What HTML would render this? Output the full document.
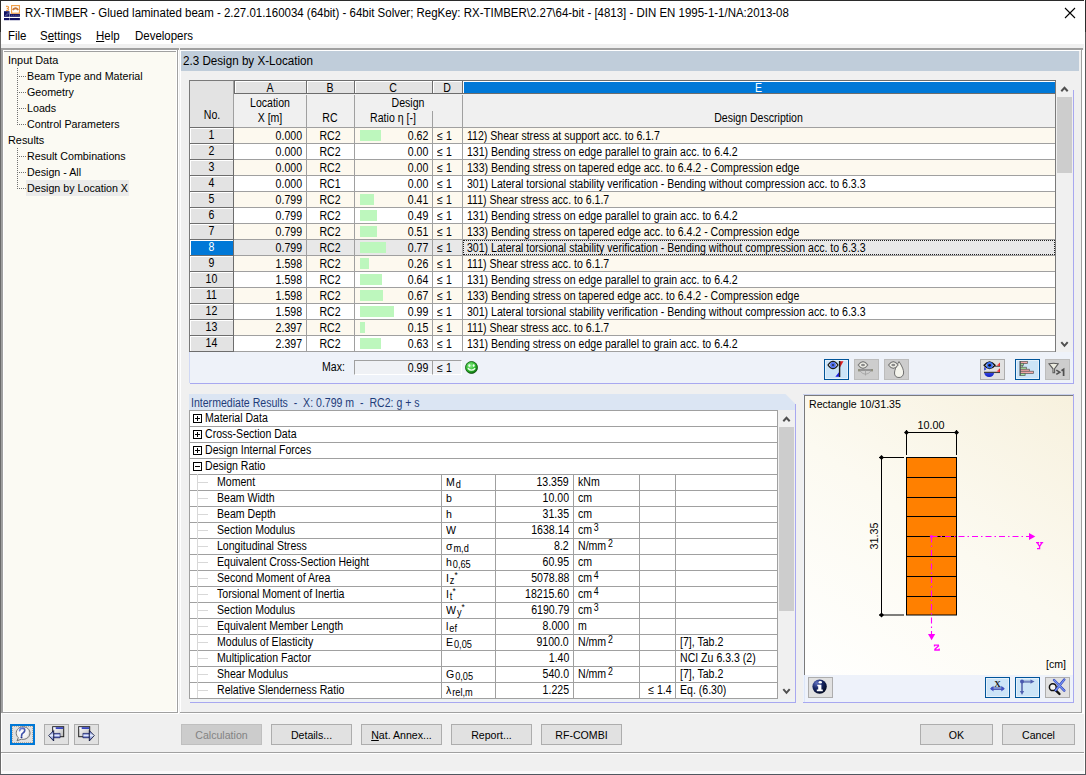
<!DOCTYPE html>
<html><head><meta charset="utf-8">
<style>
*{box-sizing:border-box;margin:0;padding:0}
html,body{width:1086px;height:775px;overflow:hidden;background:#f0f0f0;font-family:"Liberation Sans",sans-serif;color:#000}
.a{position:absolute}
svg.a{overflow:visible}
.t{position:absolute;white-space:nowrap;line-height:16px;font-size:10.8px}
sub{font-size:10px;vertical-align:baseline;position:relative;top:2px;margin-left:1px}
sup{font-size:10px;vertical-align:baseline;position:relative;top:-3px;margin-left:2px}
</style></head><body>

<div class="a" style="left:0px;top:0px;width:1086px;height:775px;background:#f0f0f0"></div>
<div class="a" style="left:0px;top:0px;width:1086px;height:1px;background:#2b2b2b"></div>
<div class="a" style="left:0px;top:0px;width:1px;height:32px;background:#2a2a2a"></div>
<div class="a" style="left:0px;top:32px;width:1px;height:743px;background:#6a6a6a"></div>
<div class="a" style="left:1085px;top:0px;width:1px;height:32px;background:#2b2b2b"></div>
<div class="a" style="left:1085px;top:32px;width:1px;height:743px;background:#5a5a5a"></div>
<div class="a" style="left:1084px;top:0px;width:1px;height:775px;background:#fff"></div>
<div class="a" style="left:0px;top:774px;width:1086px;height:1px;background:#505860"></div>
<div class="a" style="left:1px;top:771px;width:1083px;height:3px;background:#fafafa"></div>
<div class="a" style="left:1px;top:1px;width:1083px;height:43px;background:#fff"></div>
<svg class="a" style="left:2px;top:3px" width="20" height="19" viewBox="2 3 20 19">
<rect x="4" y="11.2" width="5.5" height="5.6" fill="#101060"/>
<path d="M5 16L8.5 12M6.5 16L9 13" stroke="#8080b0" stroke-width="0.6"/>
<rect x="9.9" y="13.8" width="10" height="3" fill="#101060"/>
<path d="M11 15.3H19" stroke="#6060a0" stroke-width="0.8" stroke-dasharray="1.2 0.6"/>
<rect x="4" y="18" width="5.5" height="2.2" fill="#101060"/>
<rect x="9.9" y="18" width="10" height="2.2" fill="#101060"/>
<rect x="11.6" y="5.6" width="7.8" height="7.6" fill="#fff" stroke="#f09a40" stroke-width="1.1"/>
<path d="M12.8 10Q15.5 6.6 18.2 10" stroke="#c87838" stroke-width="2" fill="none"/>
<path d="M6 6.4Q8.8 5.8 8.6 7.6Q8.4 8.6 6.8 8.4M6.8 8.4Q8.9 8.6 8.6 9.8Q8.2 10.8 6 10.2" stroke="#f09a40" stroke-width="1.1" fill="none"/>
</svg>
<div class="t" style="left:25px;top:5px;;font-size:12px;transform:scaleX(0.956);transform-origin:0 0">RX-TIMBER - Glued laminated beam - 2.27.01.160034 (64bit) - 64bit Solver; RegKey: RX-TIMBER\2.27\64-bit - [4813] - DIN EN 1995-1-1/NA:2013-08</div>
<svg class="a" style="left:1064px;top:7px" width="12" height="12"><path d="M1 1L11 11M11 1L1 11" stroke="#000" stroke-width="1.1"/></svg>
<div class="t" style="left:8px;top:28px;;font-size:12px;transform:scaleX(0.956);transform-origin:0 0">File</div>
<div class="t" style="left:40px;top:28px;;font-size:12px;transform:scaleX(0.956);transform-origin:0 0">S<u>e</u>ttings</div>
<div class="t" style="left:96px;top:28px;;font-size:12px;transform:scaleX(0.956);transform-origin:0 0"><u>H</u>elp</div>
<div class="t" style="left:135px;top:28px;;font-size:12px;transform:scaleX(0.956);transform-origin:0 0">Developers</div>
<div class="a" style="left:1px;top:44px;width:1083px;height:4px;background:#f0f0f0"></div>
<div class="a" style="left:1px;top:48px;width:1082px;height:2px;background:#a0a0a0"></div>
<div class="a" style="left:179px;top:48px;width:1px;height:2px;background:#f0f0f0"></div>
<div class="a" style="left:1px;top:50px;width:2px;height:663px;background:#a0a0a0"></div>
<div class="a" style="left:1px;top:713px;width:1px;height:58px;background:#fff"></div>
<div class="a" style="left:3px;top:50px;width:176px;height:664px;background:#fff"></div>
<div class="a" style="left:4px;top:51px;width:172px;height:1px;background:#a0a0a0"></div>
<div class="a" style="left:4px;top:52px;width:172px;height:659px;background:#fbfaf3"></div>
<div class="a" style="left:177px;top:50px;width:1px;height:663px;background:#a0a0a0"></div>
<div class="a" style="left:3px;top:712px;width:175px;height:1px;background:#a0a0a0"></div>
<div class="t" style="left:8px;top:52px;;font-size:10.9px">Input Data</div>
<div class="t" style="left:27px;top:68px;;font-size:10.7px">Beam Type and Material</div>
<div class="a" style="left:17px;top:76px;width:9px;height:1px;background-image:linear-gradient(90deg,#707070 50%,transparent 50%);background-size:2px 1px"></div>
<div class="t" style="left:27px;top:84px;;font-size:10.7px">Geometry</div>
<div class="a" style="left:17px;top:92px;width:9px;height:1px;background-image:linear-gradient(90deg,#707070 50%,transparent 50%);background-size:2px 1px"></div>
<div class="t" style="left:27px;top:100px;;font-size:10.7px">Loads</div>
<div class="a" style="left:17px;top:108px;width:9px;height:1px;background-image:linear-gradient(90deg,#707070 50%,transparent 50%);background-size:2px 1px"></div>
<div class="t" style="left:27px;top:116px;;font-size:10.7px">Control Parameters</div>
<div class="a" style="left:17px;top:124px;width:9px;height:1px;background-image:linear-gradient(90deg,#707070 50%,transparent 50%);background-size:2px 1px"></div>
<div class="t" style="left:8px;top:132px;;font-size:10.9px">Results</div>
<div class="t" style="left:27px;top:148px;;font-size:10.7px">Result Combinations</div>
<div class="a" style="left:17px;top:156px;width:9px;height:1px;background-image:linear-gradient(90deg,#707070 50%,transparent 50%);background-size:2px 1px"></div>
<div class="t" style="left:27px;top:164px;;font-size:10.7px">Design - All</div>
<div class="a" style="left:17px;top:172px;width:9px;height:1px;background-image:linear-gradient(90deg,#707070 50%,transparent 50%);background-size:2px 1px"></div>
<div class="a" style="left:26px;top:180px;width:103px;height:16px;background:#ebebea"></div>
<div class="t" style="left:27px;top:180px;;font-size:10.7px">Design by Location X</div>
<div class="a" style="left:17px;top:188px;width:9px;height:1px;background-image:linear-gradient(90deg,#707070 50%,transparent 50%);background-size:2px 1px"></div>
<div class="a" style="left:17px;top:68px;width:1px;height:57px;background-image:linear-gradient(#707070 50%,transparent 50%);background-size:1px 2px"></div>
<div class="a" style="left:17px;top:148px;width:1px;height:41px;background-image:linear-gradient(#707070 50%,transparent 50%);background-size:1px 2px"></div>
<div class="a" style="left:180px;top:50px;width:904px;height:664px;background:#fff"></div>
<div class="a" style="left:181px;top:51px;width:900px;height:661px;background:#f0f0f0"></div>
<div class="a" style="left:1081px;top:50px;width:1px;height:663px;background:#a0a0a0"></div>
<div class="a" style="left:180px;top:712px;width:902px;height:1px;background:#a0a0a0"></div>
<div class="a" style="left:181px;top:51px;width:898px;height:20px;background:#c0cdda"></div>
<div class="t" style="left:183px;top:53px;;font-size:12px;transform:scaleX(0.97);transform-origin:0 0">2.3 Design by X-Location</div>
<div class="a" style="left:189px;top:80px;width:867px;height:272px;background:#f0f0f0;border-left:1px solid #7a7a7a;border-top:1px solid #7a7a7a"></div>
<div class="a" style="left:190px;top:81px;width:44px;height:46px;background:#e3e3e3;border-right:1px solid #a0a0a0"></div>
<div class="t" style="left:190px;width:44px;text-align:center;top:107px;;font-size:12px;transform:scaleX(0.88);transform-origin:50% 0">No.</div>
<div class="a" style="left:234px;top:80px;width:73px;height:14px;background:#6d6d6d"></div>
<div class="a" style="left:235px;top:81px;width:71px;height:12px;background:#fff"></div>
<div class="a" style="left:236px;top:82px;width:70px;height:11px;background:#e3e3e3"></div>
<div class="t" style="left:234px;width:72px;text-align:center;top:80px;;font-size:12px;transform:scaleX(0.88);transform-origin:50% 0">A</div>
<div class="a" style="left:306px;top:80px;width:49px;height:14px;background:#6d6d6d"></div>
<div class="a" style="left:307px;top:81px;width:47px;height:12px;background:#fff"></div>
<div class="a" style="left:308px;top:82px;width:46px;height:11px;background:#e3e3e3"></div>
<div class="t" style="left:306px;width:48px;text-align:center;top:80px;;font-size:12px;transform:scaleX(0.88);transform-origin:50% 0">B</div>
<div class="a" style="left:354px;top:80px;width:79px;height:14px;background:#6d6d6d"></div>
<div class="a" style="left:355px;top:81px;width:77px;height:12px;background:#fff"></div>
<div class="a" style="left:356px;top:82px;width:76px;height:11px;background:#e3e3e3"></div>
<div class="t" style="left:354px;width:78px;text-align:center;top:80px;;font-size:12px;transform:scaleX(0.88);transform-origin:50% 0">C</div>
<div class="a" style="left:432px;top:80px;width:31px;height:14px;background:#6d6d6d"></div>
<div class="a" style="left:433px;top:81px;width:29px;height:12px;background:#fff"></div>
<div class="a" style="left:434px;top:82px;width:28px;height:11px;background:#e3e3e3"></div>
<div class="t" style="left:432px;width:30px;text-align:center;top:80px;;font-size:12px;transform:scaleX(0.88);transform-origin:50% 0">D</div>
<div class="a" style="left:462px;top:80px;width:594px;height:14px;background:#6d6d6d"></div>
<div class="a" style="left:463px;top:81px;width:592px;height:12px;background:#fff"></div>
<div class="a" style="left:464px;top:82px;width:591px;height:11px;background:#0078d7"></div>
<div class="t" style="left:462px;width:593px;text-align:center;top:80px;color:#fff;font-size:12px;transform:scaleX(0.88);transform-origin:50% 0">E</div>
<div class="a" style="left:234px;top:95px;width:821px;height:32px;background:#f0f0f0"></div>
<div class="a" style="left:306px;top:95px;width:1px;height:32px;background:#a0a0a0"></div>
<div class="a" style="left:354px;top:95px;width:1px;height:32px;background:#a0a0a0"></div>
<div class="a" style="left:462px;top:95px;width:1px;height:32px;background:#a0a0a0"></div>
<div class="a" style="left:432px;top:111px;width:1px;height:16px;background:#a0a0a0"></div>
<div class="t" style="left:234px;width:72px;text-align:center;top:95px;;font-size:12px;transform:scaleX(0.88);transform-origin:50% 0">Location</div>
<div class="t" style="left:234px;width:72px;text-align:center;top:110px;;font-size:12px;transform:scaleX(0.88);transform-origin:50% 0">X [m]</div>
<div class="t" style="left:306px;width:48px;text-align:center;top:110px;;font-size:12px;transform:scaleX(0.88);transform-origin:50% 0">RC</div>
<div class="t" style="left:354px;width:108px;text-align:center;top:95px;;font-size:12px;transform:scaleX(0.88);transform-origin:50% 0">Design</div>
<div class="t" style="left:354px;width:78px;text-align:center;top:110px;;font-size:12px;transform:scaleX(0.88);transform-origin:50% 0">Ratio &eta; [-]</div>
<div class="t" style="left:462px;width:593px;text-align:center;top:110px;;font-size:12px;transform:scaleX(0.88);transform-origin:50% 0">Design Description</div>
<div class="a" style="left:234px;top:127px;width:821px;height:16px;background:#fdf9ef;border-top:1px solid #a0a0a0"></div>
<div class="a" style="left:306px;top:127px;width:1px;height:16px;background:#a0a0a0"></div>
<div class="a" style="left:354px;top:127px;width:1px;height:16px;background:#a0a0a0"></div>
<div class="a" style="left:432px;top:127px;width:1px;height:16px;background:#a0a0a0"></div>
<div class="a" style="left:462px;top:127px;width:1px;height:16px;background:#a0a0a0"></div>
<div class="a" style="left:190px;top:127px;width:44px;height:16px;background:#6d6d6d"></div>
<div class="a" style="left:190px;top:128px;width:43px;height:15px;background:#fff"></div>
<div class="a" style="left:191px;top:129px;width:42px;height:14px;background:#e3e3e3"></div>
<div class="t" style="left:190px;width:43px;text-align:center;top:127px;;font-size:12px;transform:scaleX(0.88);transform-origin:50% 0">1</div>
<div class="t" style="right:784px;top:128px;;font-size:12px;transform:scaleX(0.88);transform-origin:100% 0">0.000</div>
<div class="t" style="left:306px;width:48px;text-align:center;top:128px;;font-size:12px;transform:scaleX(0.88);transform-origin:50% 0">RC2</div>
<div class="a" style="left:360px;top:130px;width:21px;height:11px;background:#bdf7bd"></div>
<div class="t" style="right:658px;top:128px;;font-size:12px;transform:scaleX(0.88);transform-origin:100% 0">0.62</div>
<div class="t" style="left:437px;top:128px;;font-size:12px;transform:scaleX(0.88);transform-origin:0 0">&le;</div>
<div class="t" style="left:446px;top:128px;;font-size:12px;transform:scaleX(0.88);transform-origin:0 0">1</div>
<div class="t" style="left:467px;top:128px;;font-size:12px;transform:scaleX(0.88);transform-origin:0 0">112) Shear stress at support acc. to 6.1.7</div>
<div class="a" style="left:234px;top:143px;width:821px;height:16px;background:#ffffff;border-top:1px solid #a0a0a0"></div>
<div class="a" style="left:306px;top:143px;width:1px;height:16px;background:#a0a0a0"></div>
<div class="a" style="left:354px;top:143px;width:1px;height:16px;background:#a0a0a0"></div>
<div class="a" style="left:432px;top:143px;width:1px;height:16px;background:#a0a0a0"></div>
<div class="a" style="left:462px;top:143px;width:1px;height:16px;background:#a0a0a0"></div>
<div class="a" style="left:190px;top:143px;width:44px;height:16px;background:#6d6d6d"></div>
<div class="a" style="left:190px;top:144px;width:43px;height:15px;background:#fff"></div>
<div class="a" style="left:191px;top:145px;width:42px;height:14px;background:#e3e3e3"></div>
<div class="t" style="left:190px;width:43px;text-align:center;top:143px;;font-size:12px;transform:scaleX(0.88);transform-origin:50% 0">2</div>
<div class="t" style="right:784px;top:144px;;font-size:12px;transform:scaleX(0.88);transform-origin:100% 0">0.000</div>
<div class="t" style="left:306px;width:48px;text-align:center;top:144px;;font-size:12px;transform:scaleX(0.88);transform-origin:50% 0">RC2</div>
<div class="t" style="right:658px;top:144px;;font-size:12px;transform:scaleX(0.88);transform-origin:100% 0">0.00</div>
<div class="t" style="left:437px;top:144px;;font-size:12px;transform:scaleX(0.88);transform-origin:0 0">&le;</div>
<div class="t" style="left:446px;top:144px;;font-size:12px;transform:scaleX(0.88);transform-origin:0 0">1</div>
<div class="t" style="left:467px;top:144px;;font-size:12px;transform:scaleX(0.88);transform-origin:0 0">131) Bending stress on edge parallel to grain acc. to 6.4.2</div>
<div class="a" style="left:234px;top:159px;width:821px;height:16px;background:#fdf9ef;border-top:1px solid #a0a0a0"></div>
<div class="a" style="left:306px;top:159px;width:1px;height:16px;background:#a0a0a0"></div>
<div class="a" style="left:354px;top:159px;width:1px;height:16px;background:#a0a0a0"></div>
<div class="a" style="left:432px;top:159px;width:1px;height:16px;background:#a0a0a0"></div>
<div class="a" style="left:462px;top:159px;width:1px;height:16px;background:#a0a0a0"></div>
<div class="a" style="left:190px;top:159px;width:44px;height:16px;background:#6d6d6d"></div>
<div class="a" style="left:190px;top:160px;width:43px;height:15px;background:#fff"></div>
<div class="a" style="left:191px;top:161px;width:42px;height:14px;background:#e3e3e3"></div>
<div class="t" style="left:190px;width:43px;text-align:center;top:159px;;font-size:12px;transform:scaleX(0.88);transform-origin:50% 0">3</div>
<div class="t" style="right:784px;top:160px;;font-size:12px;transform:scaleX(0.88);transform-origin:100% 0">0.000</div>
<div class="t" style="left:306px;width:48px;text-align:center;top:160px;;font-size:12px;transform:scaleX(0.88);transform-origin:50% 0">RC2</div>
<div class="t" style="right:658px;top:160px;;font-size:12px;transform:scaleX(0.88);transform-origin:100% 0">0.00</div>
<div class="t" style="left:437px;top:160px;;font-size:12px;transform:scaleX(0.88);transform-origin:0 0">&le;</div>
<div class="t" style="left:446px;top:160px;;font-size:12px;transform:scaleX(0.88);transform-origin:0 0">1</div>
<div class="t" style="left:467px;top:160px;;font-size:12px;transform:scaleX(0.88);transform-origin:0 0">133) Bending stress on tapered edge acc. to 6.4.2 - Compression edge</div>
<div class="a" style="left:234px;top:175px;width:821px;height:16px;background:#ffffff;border-top:1px solid #a0a0a0"></div>
<div class="a" style="left:306px;top:175px;width:1px;height:16px;background:#a0a0a0"></div>
<div class="a" style="left:354px;top:175px;width:1px;height:16px;background:#a0a0a0"></div>
<div class="a" style="left:432px;top:175px;width:1px;height:16px;background:#a0a0a0"></div>
<div class="a" style="left:462px;top:175px;width:1px;height:16px;background:#a0a0a0"></div>
<div class="a" style="left:190px;top:175px;width:44px;height:16px;background:#6d6d6d"></div>
<div class="a" style="left:190px;top:176px;width:43px;height:15px;background:#fff"></div>
<div class="a" style="left:191px;top:177px;width:42px;height:14px;background:#e3e3e3"></div>
<div class="t" style="left:190px;width:43px;text-align:center;top:175px;;font-size:12px;transform:scaleX(0.88);transform-origin:50% 0">4</div>
<div class="t" style="right:784px;top:176px;;font-size:12px;transform:scaleX(0.88);transform-origin:100% 0">0.000</div>
<div class="t" style="left:306px;width:48px;text-align:center;top:176px;;font-size:12px;transform:scaleX(0.88);transform-origin:50% 0">RC1</div>
<div class="t" style="right:658px;top:176px;;font-size:12px;transform:scaleX(0.88);transform-origin:100% 0">0.00</div>
<div class="t" style="left:437px;top:176px;;font-size:12px;transform:scaleX(0.88);transform-origin:0 0">&le;</div>
<div class="t" style="left:446px;top:176px;;font-size:12px;transform:scaleX(0.88);transform-origin:0 0">1</div>
<div class="t" style="left:467px;top:176px;;font-size:12px;transform:scaleX(0.88);transform-origin:0 0">301) Lateral torsional stability verification - Bending without compression acc. to 6.3.3</div>
<div class="a" style="left:234px;top:191px;width:821px;height:16px;background:#fdf9ef;border-top:1px solid #a0a0a0"></div>
<div class="a" style="left:306px;top:191px;width:1px;height:16px;background:#a0a0a0"></div>
<div class="a" style="left:354px;top:191px;width:1px;height:16px;background:#a0a0a0"></div>
<div class="a" style="left:432px;top:191px;width:1px;height:16px;background:#a0a0a0"></div>
<div class="a" style="left:462px;top:191px;width:1px;height:16px;background:#a0a0a0"></div>
<div class="a" style="left:190px;top:191px;width:44px;height:16px;background:#6d6d6d"></div>
<div class="a" style="left:190px;top:192px;width:43px;height:15px;background:#fff"></div>
<div class="a" style="left:191px;top:193px;width:42px;height:14px;background:#e3e3e3"></div>
<div class="t" style="left:190px;width:43px;text-align:center;top:191px;;font-size:12px;transform:scaleX(0.88);transform-origin:50% 0">5</div>
<div class="t" style="right:784px;top:192px;;font-size:12px;transform:scaleX(0.88);transform-origin:100% 0">0.799</div>
<div class="t" style="left:306px;width:48px;text-align:center;top:192px;;font-size:12px;transform:scaleX(0.88);transform-origin:50% 0">RC2</div>
<div class="a" style="left:360px;top:194px;width:14px;height:11px;background:#bdf7bd"></div>
<div class="t" style="right:658px;top:192px;;font-size:12px;transform:scaleX(0.88);transform-origin:100% 0">0.41</div>
<div class="t" style="left:437px;top:192px;;font-size:12px;transform:scaleX(0.88);transform-origin:0 0">&le;</div>
<div class="t" style="left:446px;top:192px;;font-size:12px;transform:scaleX(0.88);transform-origin:0 0">1</div>
<div class="t" style="left:467px;top:192px;;font-size:12px;transform:scaleX(0.88);transform-origin:0 0">111) Shear stress acc. to 6.1.7</div>
<div class="a" style="left:234px;top:207px;width:821px;height:16px;background:#ffffff;border-top:1px solid #a0a0a0"></div>
<div class="a" style="left:306px;top:207px;width:1px;height:16px;background:#a0a0a0"></div>
<div class="a" style="left:354px;top:207px;width:1px;height:16px;background:#a0a0a0"></div>
<div class="a" style="left:432px;top:207px;width:1px;height:16px;background:#a0a0a0"></div>
<div class="a" style="left:462px;top:207px;width:1px;height:16px;background:#a0a0a0"></div>
<div class="a" style="left:190px;top:207px;width:44px;height:16px;background:#6d6d6d"></div>
<div class="a" style="left:190px;top:208px;width:43px;height:15px;background:#fff"></div>
<div class="a" style="left:191px;top:209px;width:42px;height:14px;background:#e3e3e3"></div>
<div class="t" style="left:190px;width:43px;text-align:center;top:207px;;font-size:12px;transform:scaleX(0.88);transform-origin:50% 0">6</div>
<div class="t" style="right:784px;top:208px;;font-size:12px;transform:scaleX(0.88);transform-origin:100% 0">0.799</div>
<div class="t" style="left:306px;width:48px;text-align:center;top:208px;;font-size:12px;transform:scaleX(0.88);transform-origin:50% 0">RC2</div>
<div class="a" style="left:360px;top:210px;width:17px;height:11px;background:#bdf7bd"></div>
<div class="t" style="right:658px;top:208px;;font-size:12px;transform:scaleX(0.88);transform-origin:100% 0">0.49</div>
<div class="t" style="left:437px;top:208px;;font-size:12px;transform:scaleX(0.88);transform-origin:0 0">&le;</div>
<div class="t" style="left:446px;top:208px;;font-size:12px;transform:scaleX(0.88);transform-origin:0 0">1</div>
<div class="t" style="left:467px;top:208px;;font-size:12px;transform:scaleX(0.88);transform-origin:0 0">131) Bending stress on edge parallel to grain acc. to 6.4.2</div>
<div class="a" style="left:234px;top:223px;width:821px;height:16px;background:#fdf9ef;border-top:1px solid #a0a0a0"></div>
<div class="a" style="left:306px;top:223px;width:1px;height:16px;background:#a0a0a0"></div>
<div class="a" style="left:354px;top:223px;width:1px;height:16px;background:#a0a0a0"></div>
<div class="a" style="left:432px;top:223px;width:1px;height:16px;background:#a0a0a0"></div>
<div class="a" style="left:462px;top:223px;width:1px;height:16px;background:#a0a0a0"></div>
<div class="a" style="left:190px;top:223px;width:44px;height:16px;background:#6d6d6d"></div>
<div class="a" style="left:190px;top:224px;width:43px;height:15px;background:#fff"></div>
<div class="a" style="left:191px;top:225px;width:42px;height:14px;background:#e3e3e3"></div>
<div class="t" style="left:190px;width:43px;text-align:center;top:223px;;font-size:12px;transform:scaleX(0.88);transform-origin:50% 0">7</div>
<div class="t" style="right:784px;top:224px;;font-size:12px;transform:scaleX(0.88);transform-origin:100% 0">0.799</div>
<div class="t" style="left:306px;width:48px;text-align:center;top:224px;;font-size:12px;transform:scaleX(0.88);transform-origin:50% 0">RC2</div>
<div class="a" style="left:360px;top:226px;width:17px;height:11px;background:#bdf7bd"></div>
<div class="t" style="right:658px;top:224px;;font-size:12px;transform:scaleX(0.88);transform-origin:100% 0">0.51</div>
<div class="t" style="left:437px;top:224px;;font-size:12px;transform:scaleX(0.88);transform-origin:0 0">&le;</div>
<div class="t" style="left:446px;top:224px;;font-size:12px;transform:scaleX(0.88);transform-origin:0 0">1</div>
<div class="t" style="left:467px;top:224px;;font-size:12px;transform:scaleX(0.88);transform-origin:0 0">133) Bending stress on tapered edge acc. to 6.4.2 - Compression edge</div>
<div class="a" style="left:234px;top:239px;width:821px;height:16px;background:#e8e8e8;border-top:1px solid #a0a0a0"></div>
<div class="a" style="left:306px;top:239px;width:1px;height:16px;background:#a0a0a0"></div>
<div class="a" style="left:354px;top:239px;width:1px;height:16px;background:#a0a0a0"></div>
<div class="a" style="left:432px;top:239px;width:1px;height:16px;background:#a0a0a0"></div>
<div class="a" style="left:462px;top:239px;width:1px;height:16px;background:#a0a0a0"></div>
<div class="a" style="left:190px;top:239px;width:44px;height:16px;background:#6d6d6d"></div>
<div class="a" style="left:190px;top:240px;width:43px;height:15px;background:#fff"></div>
<div class="a" style="left:191px;top:241px;width:42px;height:14px;background:#0078d7"></div>
<div class="t" style="left:190px;width:43px;text-align:center;top:239px;color:#fff;font-size:12px;transform:scaleX(0.88);transform-origin:50% 0">8</div>
<div class="t" style="right:784px;top:240px;;font-size:12px;transform:scaleX(0.88);transform-origin:100% 0">0.799</div>
<div class="t" style="left:306px;width:48px;text-align:center;top:240px;;font-size:12px;transform:scaleX(0.88);transform-origin:50% 0">RC2</div>
<div class="a" style="left:360px;top:242px;width:26px;height:11px;background:#bdf7bd"></div>
<div class="t" style="right:658px;top:240px;;font-size:12px;transform:scaleX(0.88);transform-origin:100% 0">0.77</div>
<div class="t" style="left:437px;top:240px;;font-size:12px;transform:scaleX(0.88);transform-origin:0 0">&le;</div>
<div class="t" style="left:446px;top:240px;;font-size:12px;transform:scaleX(0.88);transform-origin:0 0">1</div>
<div class="t" style="left:467px;top:240px;;font-size:12px;transform:scaleX(0.88);transform-origin:0 0">301) Lateral torsional stability verification - Bending without compression acc. to 6.3.3</div>
<div class="a" style="left:463px;top:240px;width:592px;height:15px;border:1px dotted #202020"></div>
<div class="a" style="left:234px;top:255px;width:821px;height:16px;background:#fdf9ef;border-top:1px solid #a0a0a0"></div>
<div class="a" style="left:306px;top:255px;width:1px;height:16px;background:#a0a0a0"></div>
<div class="a" style="left:354px;top:255px;width:1px;height:16px;background:#a0a0a0"></div>
<div class="a" style="left:432px;top:255px;width:1px;height:16px;background:#a0a0a0"></div>
<div class="a" style="left:462px;top:255px;width:1px;height:16px;background:#a0a0a0"></div>
<div class="a" style="left:190px;top:255px;width:44px;height:16px;background:#6d6d6d"></div>
<div class="a" style="left:190px;top:256px;width:43px;height:15px;background:#fff"></div>
<div class="a" style="left:191px;top:257px;width:42px;height:14px;background:#e3e3e3"></div>
<div class="t" style="left:190px;width:43px;text-align:center;top:255px;;font-size:12px;transform:scaleX(0.88);transform-origin:50% 0">9</div>
<div class="t" style="right:784px;top:256px;;font-size:12px;transform:scaleX(0.88);transform-origin:100% 0">1.598</div>
<div class="t" style="left:306px;width:48px;text-align:center;top:256px;;font-size:12px;transform:scaleX(0.88);transform-origin:50% 0">RC2</div>
<div class="a" style="left:360px;top:258px;width:9px;height:11px;background:#bdf7bd"></div>
<div class="t" style="right:658px;top:256px;;font-size:12px;transform:scaleX(0.88);transform-origin:100% 0">0.26</div>
<div class="t" style="left:437px;top:256px;;font-size:12px;transform:scaleX(0.88);transform-origin:0 0">&le;</div>
<div class="t" style="left:446px;top:256px;;font-size:12px;transform:scaleX(0.88);transform-origin:0 0">1</div>
<div class="t" style="left:467px;top:256px;;font-size:12px;transform:scaleX(0.88);transform-origin:0 0">111) Shear stress acc. to 6.1.7</div>
<div class="a" style="left:234px;top:271px;width:821px;height:16px;background:#ffffff;border-top:1px solid #a0a0a0"></div>
<div class="a" style="left:306px;top:271px;width:1px;height:16px;background:#a0a0a0"></div>
<div class="a" style="left:354px;top:271px;width:1px;height:16px;background:#a0a0a0"></div>
<div class="a" style="left:432px;top:271px;width:1px;height:16px;background:#a0a0a0"></div>
<div class="a" style="left:462px;top:271px;width:1px;height:16px;background:#a0a0a0"></div>
<div class="a" style="left:190px;top:271px;width:44px;height:16px;background:#6d6d6d"></div>
<div class="a" style="left:190px;top:272px;width:43px;height:15px;background:#fff"></div>
<div class="a" style="left:191px;top:273px;width:42px;height:14px;background:#e3e3e3"></div>
<div class="t" style="left:190px;width:43px;text-align:center;top:271px;;font-size:12px;transform:scaleX(0.88);transform-origin:50% 0">10</div>
<div class="t" style="right:784px;top:272px;;font-size:12px;transform:scaleX(0.88);transform-origin:100% 0">1.598</div>
<div class="t" style="left:306px;width:48px;text-align:center;top:272px;;font-size:12px;transform:scaleX(0.88);transform-origin:50% 0">RC2</div>
<div class="a" style="left:360px;top:274px;width:22px;height:11px;background:#bdf7bd"></div>
<div class="t" style="right:658px;top:272px;;font-size:12px;transform:scaleX(0.88);transform-origin:100% 0">0.64</div>
<div class="t" style="left:437px;top:272px;;font-size:12px;transform:scaleX(0.88);transform-origin:0 0">&le;</div>
<div class="t" style="left:446px;top:272px;;font-size:12px;transform:scaleX(0.88);transform-origin:0 0">1</div>
<div class="t" style="left:467px;top:272px;;font-size:12px;transform:scaleX(0.88);transform-origin:0 0">131) Bending stress on edge parallel to grain acc. to 6.4.2</div>
<div class="a" style="left:234px;top:287px;width:821px;height:16px;background:#fdf9ef;border-top:1px solid #a0a0a0"></div>
<div class="a" style="left:306px;top:287px;width:1px;height:16px;background:#a0a0a0"></div>
<div class="a" style="left:354px;top:287px;width:1px;height:16px;background:#a0a0a0"></div>
<div class="a" style="left:432px;top:287px;width:1px;height:16px;background:#a0a0a0"></div>
<div class="a" style="left:462px;top:287px;width:1px;height:16px;background:#a0a0a0"></div>
<div class="a" style="left:190px;top:287px;width:44px;height:16px;background:#6d6d6d"></div>
<div class="a" style="left:190px;top:288px;width:43px;height:15px;background:#fff"></div>
<div class="a" style="left:191px;top:289px;width:42px;height:14px;background:#e3e3e3"></div>
<div class="t" style="left:190px;width:43px;text-align:center;top:287px;;font-size:12px;transform:scaleX(0.88);transform-origin:50% 0">11</div>
<div class="t" style="right:784px;top:288px;;font-size:12px;transform:scaleX(0.88);transform-origin:100% 0">1.598</div>
<div class="t" style="left:306px;width:48px;text-align:center;top:288px;;font-size:12px;transform:scaleX(0.88);transform-origin:50% 0">RC2</div>
<div class="a" style="left:360px;top:290px;width:23px;height:11px;background:#bdf7bd"></div>
<div class="t" style="right:658px;top:288px;;font-size:12px;transform:scaleX(0.88);transform-origin:100% 0">0.67</div>
<div class="t" style="left:437px;top:288px;;font-size:12px;transform:scaleX(0.88);transform-origin:0 0">&le;</div>
<div class="t" style="left:446px;top:288px;;font-size:12px;transform:scaleX(0.88);transform-origin:0 0">1</div>
<div class="t" style="left:467px;top:288px;;font-size:12px;transform:scaleX(0.88);transform-origin:0 0">133) Bending stress on tapered edge acc. to 6.4.2 - Compression edge</div>
<div class="a" style="left:234px;top:303px;width:821px;height:16px;background:#ffffff;border-top:1px solid #a0a0a0"></div>
<div class="a" style="left:306px;top:303px;width:1px;height:16px;background:#a0a0a0"></div>
<div class="a" style="left:354px;top:303px;width:1px;height:16px;background:#a0a0a0"></div>
<div class="a" style="left:432px;top:303px;width:1px;height:16px;background:#a0a0a0"></div>
<div class="a" style="left:462px;top:303px;width:1px;height:16px;background:#a0a0a0"></div>
<div class="a" style="left:190px;top:303px;width:44px;height:16px;background:#6d6d6d"></div>
<div class="a" style="left:190px;top:304px;width:43px;height:15px;background:#fff"></div>
<div class="a" style="left:191px;top:305px;width:42px;height:14px;background:#e3e3e3"></div>
<div class="t" style="left:190px;width:43px;text-align:center;top:303px;;font-size:12px;transform:scaleX(0.88);transform-origin:50% 0">12</div>
<div class="t" style="right:784px;top:304px;;font-size:12px;transform:scaleX(0.88);transform-origin:100% 0">1.598</div>
<div class="t" style="left:306px;width:48px;text-align:center;top:304px;;font-size:12px;transform:scaleX(0.88);transform-origin:50% 0">RC2</div>
<div class="a" style="left:360px;top:306px;width:34px;height:11px;background:#bdf7bd"></div>
<div class="t" style="right:658px;top:304px;;font-size:12px;transform:scaleX(0.88);transform-origin:100% 0">0.99</div>
<div class="t" style="left:437px;top:304px;;font-size:12px;transform:scaleX(0.88);transform-origin:0 0">&le;</div>
<div class="t" style="left:446px;top:304px;;font-size:12px;transform:scaleX(0.88);transform-origin:0 0">1</div>
<div class="t" style="left:467px;top:304px;;font-size:12px;transform:scaleX(0.88);transform-origin:0 0">301) Lateral torsional stability verification - Bending without compression acc. to 6.3.3</div>
<div class="a" style="left:234px;top:319px;width:821px;height:16px;background:#fdf9ef;border-top:1px solid #a0a0a0"></div>
<div class="a" style="left:306px;top:319px;width:1px;height:16px;background:#a0a0a0"></div>
<div class="a" style="left:354px;top:319px;width:1px;height:16px;background:#a0a0a0"></div>
<div class="a" style="left:432px;top:319px;width:1px;height:16px;background:#a0a0a0"></div>
<div class="a" style="left:462px;top:319px;width:1px;height:16px;background:#a0a0a0"></div>
<div class="a" style="left:190px;top:319px;width:44px;height:16px;background:#6d6d6d"></div>
<div class="a" style="left:190px;top:320px;width:43px;height:15px;background:#fff"></div>
<div class="a" style="left:191px;top:321px;width:42px;height:14px;background:#e3e3e3"></div>
<div class="t" style="left:190px;width:43px;text-align:center;top:319px;;font-size:12px;transform:scaleX(0.88);transform-origin:50% 0">13</div>
<div class="t" style="right:784px;top:320px;;font-size:12px;transform:scaleX(0.88);transform-origin:100% 0">2.397</div>
<div class="t" style="left:306px;width:48px;text-align:center;top:320px;;font-size:12px;transform:scaleX(0.88);transform-origin:50% 0">RC2</div>
<div class="a" style="left:360px;top:322px;width:5px;height:11px;background:#bdf7bd"></div>
<div class="t" style="right:658px;top:320px;;font-size:12px;transform:scaleX(0.88);transform-origin:100% 0">0.15</div>
<div class="t" style="left:437px;top:320px;;font-size:12px;transform:scaleX(0.88);transform-origin:0 0">&le;</div>
<div class="t" style="left:446px;top:320px;;font-size:12px;transform:scaleX(0.88);transform-origin:0 0">1</div>
<div class="t" style="left:467px;top:320px;;font-size:12px;transform:scaleX(0.88);transform-origin:0 0">111) Shear stress acc. to 6.1.7</div>
<div class="a" style="left:234px;top:335px;width:821px;height:16px;background:#ffffff;border-top:1px solid #a0a0a0"></div>
<div class="a" style="left:306px;top:335px;width:1px;height:16px;background:#a0a0a0"></div>
<div class="a" style="left:354px;top:335px;width:1px;height:16px;background:#a0a0a0"></div>
<div class="a" style="left:432px;top:335px;width:1px;height:16px;background:#a0a0a0"></div>
<div class="a" style="left:462px;top:335px;width:1px;height:16px;background:#a0a0a0"></div>
<div class="a" style="left:190px;top:335px;width:44px;height:16px;background:#6d6d6d"></div>
<div class="a" style="left:190px;top:336px;width:43px;height:15px;background:#fff"></div>
<div class="a" style="left:191px;top:337px;width:42px;height:14px;background:#e3e3e3"></div>
<div class="t" style="left:190px;width:43px;text-align:center;top:335px;;font-size:12px;transform:scaleX(0.88);transform-origin:50% 0">14</div>
<div class="t" style="right:784px;top:336px;;font-size:12px;transform:scaleX(0.88);transform-origin:100% 0">2.397</div>
<div class="t" style="left:306px;width:48px;text-align:center;top:336px;;font-size:12px;transform:scaleX(0.88);transform-origin:50% 0">RC2</div>
<div class="a" style="left:360px;top:338px;width:21px;height:11px;background:#bdf7bd"></div>
<div class="t" style="right:658px;top:336px;;font-size:12px;transform:scaleX(0.88);transform-origin:100% 0">0.63</div>
<div class="t" style="left:437px;top:336px;;font-size:12px;transform:scaleX(0.88);transform-origin:0 0">&le;</div>
<div class="t" style="left:446px;top:336px;;font-size:12px;transform:scaleX(0.88);transform-origin:0 0">1</div>
<div class="t" style="left:467px;top:336px;;font-size:12px;transform:scaleX(0.88);transform-origin:0 0">131) Bending stress on edge parallel to grain acc. to 6.4.2</div>
<div class="a" style="left:189px;top:351px;width:867px;height:1px;background:#a0a0a0"></div>
<div class="a" style="left:189px;top:351px;width:45px;height:1px;background:#6d6d6d"></div>
<div class="a" style="left:1055px;top:81px;width:1px;height:271px;background:#7a7a7a"></div>
<div class="a" style="left:1056px;top:80px;width:17px;height:272px;background:#f0f0f0"></div>
<div class="a" style="left:1057px;top:97px;width:15px;height:76px;background:#cdcdcd"></div>
<svg class="a" style="left:1058px;top:84px" width="14" height="10" viewBox="1058 84 14 10"><path d="M1061.3 91.2L1064.5 87.8L1067.7 91.2" stroke="#505050" stroke-width="2" fill="none"/></svg>
<svg class="a" style="left:1058px;top:338px" width="14" height="12" viewBox="1058 338 14 12"><path d="M1061.3 342.2L1064.5 345.8L1067.7 342.2" stroke="#505050" stroke-width="2" fill="none"/></svg>
<div class="a" style="left:190px;top:352px;width:883px;height:31px;background:#eef2f9"></div>
<div class="a" style="left:189px;top:352px;width:1px;height:31px;background:#d0d8f4"></div>
<div class="a" style="left:1073px;top:90px;width:1px;height:294px;background:#a8a8f0"></div>
<div class="a" style="left:190px;top:383px;width:884px;height:1px;background:#a8a8f0"></div>
<div class="t" style="left:322px;top:359px;;font-size:12px;transform:scaleX(0.88);transform-origin:0 0">Max:</div>
<div class="a" style="left:354px;top:360px;width:78px;height:15px;background:#eff1f5;border-top:1px solid #a0a0a0;border-left:1px solid #a0a0a0;border-bottom:1px solid #fff"></div>
<div class="t" style="right:658px;top:360px;;font-size:12px;transform:scaleX(0.88);transform-origin:100% 0">0.99</div>
<div class="a" style="left:432px;top:360px;width:30px;height:15px;background:#eff1f5;border-top:1px solid #a0a0a0;border-left:1px solid #a0a0a0;border-bottom:1px solid #fff;border-right:1px solid #fff"></div>
<div class="t" style="left:437px;top:360px;;font-size:12px;transform:scaleX(0.88);transform-origin:0 0">&le;</div>
<div class="t" style="left:446px;top:360px;;font-size:12px;transform:scaleX(0.88);transform-origin:0 0">1</div>
<svg class="a" style="left:464.5px;top:360.5px" width="13" height="13" viewBox="0 0 13 13">
<defs><radialGradient id="sm" cx="0.4" cy="0.35" r="0.7"><stop offset="0" stop-color="#8ef08e"/><stop offset="0.6" stop-color="#2cb82c"/><stop offset="1" stop-color="#0a600a"/></radialGradient></defs>
<circle cx="6.5" cy="6.5" r="6" fill="url(#sm)" stroke="#0a500a" stroke-width="0.8"/>
<ellipse cx="4.3" cy="4.6" rx="1" ry="1.3" fill="#f0fff0"/><ellipse cx="8.7" cy="4.6" rx="1" ry="1.3" fill="#f0fff0"/>
<path d="M2.8 7.2Q6.5 11.2 10.2 7.2" stroke="#f0fff0" stroke-width="1.3" fill="none"/></svg>
<div class="a" style="left:824px;top:359px;width:25px;height:21px;background:#cce4f7;border:1px solid #005499;box-shadow:inset 0 0 0 1px #e5f1fb"></div>
<svg class="a" style="left:824px;top:359px" width="25" height="21" viewBox="824 359 25 21">
<path d="M828 365Q833 357.8 838 365Q833 372.2 828 365Z" fill="#e8e8e8" stroke="#1a1a1a" stroke-width="1.3"/>
<circle cx="833" cy="365" r="2.9" fill="#5070f0"/><circle cx="833" cy="365" r="1.1" fill="#303040"/>
<path d="M840 361.2H843.5L840 367.5Z" fill="#e02020"/>
<path d="M840 376.8H835.3L840 371Z" fill="#2020e0"/>
<path d="M839.6 361V377" stroke="#202020" stroke-width="1.4"/></svg>
<div class="a" style="left:854px;top:359px;width:25px;height:21px;background:#cdcdcd;border:1px solid #bcbcbc"></div>
<svg class="a" style="left:854px;top:359px" width="25" height="21" viewBox="854 359 25 21">
<path d="M858.2 365Q863 358.2 867.8 365Q863 371.8 858.2 365Z" fill="#f0f0e8" stroke="#7a7a7a" stroke-width="1.2"/>
<ellipse cx="863" cy="365" rx="2" ry="1.3" fill="#8a8a8a"/>
<path d="M858.5 370H872.5" stroke="#707070" stroke-width="1.2"/>
<rect x="858" y="369" width="2" height="2.4" fill="#909080"/><rect x="871" y="369" width="2" height="2.4" fill="#909080"/>
<path d="M860 371Q865.5 377.5 871 371M865.5 370.5V375.5" stroke="#a0a0a0" stroke-width="0.8" fill="none"/></svg>
<div class="a" style="left:884px;top:359px;width:25px;height:21px;background:#cdcdcd;border:1px solid #bcbcbc"></div>
<svg class="a" style="left:884px;top:359px" width="25" height="21" viewBox="884 359 25 21">
<path d="M899 361.5Q904 369 903.6 373Q903 377.5 899 377.5Q894.6 377.5 894.5 373Q894.5 369 899 361.5Z" fill="#f4f4ec" stroke="#707070" stroke-width="1"/>
<path d="M888.5 365Q893.3 358.2 898.1 365Q893.3 371.8 888.5 365Z" fill="#f0f0e8" stroke="#7a7a7a" stroke-width="1.2"/>
<ellipse cx="893.3" cy="365" rx="2" ry="1.3" fill="#8a8a8a"/></svg>
<div class="a" style="left:980px;top:359px;width:25px;height:21px;background:#e1e1e1;border:1px solid #adadad"></div>
<svg class="a" style="left:980px;top:359px" width="25" height="21" viewBox="980 359 25 21">
<defs><linearGradient id="rg4" x1="0" y1="0" x2="1" y2="0"><stop offset="0" stop-color="#f0c0c0"/><stop offset="1" stop-color="#e01818"/></linearGradient>
<linearGradient id="bg4" x1="0" y1="0" x2="0" y2="1"><stop offset="0" stop-color="#3848e8"/><stop offset="1" stop-color="#1020c0"/></linearGradient></defs>
<path d="M984.2 372.6A5 4.3 0 0 0 994.2 372.6Z" fill="url(#bg4)"/>
<path d="M984 372.4H1000" stroke="#404040" stroke-width="1.3"/>
<path d="M984.2 366.8L986.4 369.2L984.2 370.4Z" fill="#2030d0"/>
<path d="M995.6 366.2H1000V362.4Z" fill="url(#rg4)"/><path d="M995 366.4H1000" stroke="#505050" stroke-width="0.9"/>
<path d="M995.6 372H1000V368.2Z" fill="url(#rg4)"/>
<path d="M984.2 365.3Q989.5 358.6 995 365.3Q989.5 372 984.2 365.3Z" fill="#fff" stroke="#101010" stroke-width="1.4"/>
<circle cx="989.6" cy="365.3" r="3.2" fill="#3a6ef0"/><circle cx="989.6" cy="365.3" r="1.4" fill="#101010"/></svg>
<div class="a" style="left:1015px;top:359px;width:25px;height:21px;background:#cce4f7;border:1px solid #005499;box-shadow:inset 0 0 0 1px #e5f1fb"></div>
<svg class="a" style="left:1015px;top:359px" width="25" height="21" viewBox="1015 359 25 21"><rect x="1020.5" y="361.4" width="7.0" height="2.2" fill="#f4a8a8" stroke="#555" stroke-width="0.7"/><rect x="1020.5" y="363.3" width="2.9" height="2.2" fill="#a8e8a0" stroke="#555" stroke-width="0.7"/><rect x="1020.5" y="365.2" width="1.7" height="2.2" fill="#a8e8a0" stroke="#555" stroke-width="0.7"/><rect x="1020.5" y="367.2" width="5.8" height="2.2" fill="#a8e8a0" stroke="#555" stroke-width="0.7"/><rect x="1020.5" y="369.2" width="8.8" height="2.2" fill="#f4a8a8" stroke="#555" stroke-width="0.7"/><rect x="1020.5" y="371.2" width="12.9" height="2.2" fill="#f4a8a8" stroke="#555" stroke-width="0.7"/><rect x="1020.5" y="373.3" width="4.6" height="2.2" fill="#a8e8a0" stroke="#555" stroke-width="0.7"/><path d="M1020 361V376" stroke="#555" stroke-width="1"/></svg>
<div class="a" style="left:1045px;top:359px;width:25px;height:21px;background:#cdcdcd;border:1px solid #bcbcbc"></div>
<svg class="a" style="left:1045px;top:359px" width="25" height="21" viewBox="1045 359 25 21">
<path d="M1049 363.8Q1053.5 362.6 1058.2 363.8L1054.6 368.8V372.8H1053V368.8Z" fill="#ecece0" stroke="#5a5a5a" stroke-width="1.1"/>
<path d="M1056.3 370.2L1059.8 372.2L1056.3 374.4" stroke="#505050" stroke-width="1.5" fill="none"/>
<path d="M1061.5 370.8L1063.6 369.3V376" stroke="#505050" stroke-width="1.7" fill="none"/></svg>
<svg class="a" style="left:189px;top:394px" width="607" height="17" viewBox="189 394 607 17"><path d="M189 394H785.5L795.5 404V411H189Z" fill="#dbe5f3"/></svg>
<div class="t" style="left:191px;top:395px;color:#1f3d7a;font-size:12px;transform:scaleX(0.88);transform-origin:0 0">Intermediate Results &nbsp;- &nbsp;X: 0.799 m &nbsp;- &nbsp;RC2: g + s</div>
<div class="a" style="left:795px;top:404px;width:1px;height:298px;background:#a8a8f0"></div>
<div class="a" style="left:190px;top:699px;width:605px;height:3px;background:#eef2f4"></div>
<div class="a" style="left:190px;top:702px;width:606px;height:1px;background:#a8a8f0"></div>
<div class="a" style="left:189px;top:410px;width:589px;height:289px;background:#fff;border:1px solid #a0a0a0"></div>
<div class="a" style="left:190px;top:426px;width:588px;height:1px;background:#a0a0a0"></div>
<svg class="a" style="left:193px;top:414px" width="9" height="9"><rect x="0.5" y="0.5" width="8" height="8" fill="#fff" stroke="#000"/><path d="M2 4.5H7M4.5 2V7" stroke="#000"/></svg>
<div class="t" style="left:205px;top:410px;;font-size:12px;transform:scaleX(0.88);transform-origin:0 0">Material Data</div>
<div class="a" style="left:190px;top:442px;width:588px;height:1px;background:#a0a0a0"></div>
<svg class="a" style="left:193px;top:430px" width="9" height="9"><rect x="0.5" y="0.5" width="8" height="8" fill="#fff" stroke="#000"/><path d="M2 4.5H7M4.5 2V7" stroke="#000"/></svg>
<div class="t" style="left:205px;top:426px;;font-size:12px;transform:scaleX(0.88);transform-origin:0 0">Cross-Section Data</div>
<div class="a" style="left:190px;top:458px;width:588px;height:1px;background:#a0a0a0"></div>
<svg class="a" style="left:193px;top:446px" width="9" height="9"><rect x="0.5" y="0.5" width="8" height="8" fill="#fff" stroke="#000"/><path d="M2 4.5H7M4.5 2V7" stroke="#000"/></svg>
<div class="t" style="left:205px;top:442px;;font-size:12px;transform:scaleX(0.88);transform-origin:0 0">Design Internal Forces</div>
<div class="a" style="left:190px;top:474px;width:588px;height:1px;background:#a0a0a0"></div>
<svg class="a" style="left:193px;top:462px" width="9" height="9"><rect x="0.5" y="0.5" width="8" height="8" fill="#fff" stroke="#000"/><path d="M2 4.5H7" stroke="#000"/></svg>
<div class="t" style="left:205px;top:458px;;font-size:12px;transform:scaleX(0.88);transform-origin:0 0">Design Ratio</div>
<div class="a" style="left:190px;top:490px;width:588px;height:1px;background:#a0a0a0"></div>
<div class="t" style="left:217px;top:474px;;font-size:12px;transform:scaleX(0.88);transform-origin:0 0">Moment</div>
<div class="t" style="left:446px;top:474px;;font-size:11.5px;transform:scaleX(0.92);transform-origin:0 0">M<sub>d</sub></div>
<div class="t" style="right:517px;top:474px;;font-size:12px;transform:scaleX(0.88);transform-origin:100% 0">13.359</div>
<div class="t" style="left:578px;top:474px;;font-size:12px;transform:scaleX(0.88);transform-origin:0 0">kNm</div>
<div class="a" style="left:190px;top:506px;width:588px;height:1px;background:#a0a0a0"></div>
<div class="t" style="left:217px;top:490px;;font-size:12px;transform:scaleX(0.88);transform-origin:0 0">Beam Width</div>
<div class="t" style="left:446px;top:490px;;font-size:11.5px;transform:scaleX(0.92);transform-origin:0 0">b</div>
<div class="t" style="right:517px;top:490px;;font-size:12px;transform:scaleX(0.88);transform-origin:100% 0">10.00</div>
<div class="t" style="left:578px;top:490px;;font-size:12px;transform:scaleX(0.88);transform-origin:0 0">cm</div>
<div class="a" style="left:190px;top:522px;width:588px;height:1px;background:#a0a0a0"></div>
<div class="t" style="left:217px;top:506px;;font-size:12px;transform:scaleX(0.88);transform-origin:0 0">Beam Depth</div>
<div class="t" style="left:446px;top:506px;;font-size:11.5px;transform:scaleX(0.92);transform-origin:0 0">h</div>
<div class="t" style="right:517px;top:506px;;font-size:12px;transform:scaleX(0.88);transform-origin:100% 0">31.35</div>
<div class="t" style="left:578px;top:506px;;font-size:12px;transform:scaleX(0.88);transform-origin:0 0">cm</div>
<div class="a" style="left:190px;top:538px;width:588px;height:1px;background:#a0a0a0"></div>
<div class="t" style="left:217px;top:522px;;font-size:12px;transform:scaleX(0.88);transform-origin:0 0">Section Modulus</div>
<div class="t" style="left:446px;top:522px;;font-size:11.5px;transform:scaleX(0.92);transform-origin:0 0">W</div>
<div class="t" style="right:517px;top:522px;;font-size:12px;transform:scaleX(0.88);transform-origin:100% 0">1638.14</div>
<div class="t" style="left:578px;top:522px;;font-size:12px;transform:scaleX(0.88);transform-origin:0 0">cm<sup>3</sup></div>
<div class="a" style="left:190px;top:554px;width:588px;height:1px;background:#a0a0a0"></div>
<div class="t" style="left:217px;top:538px;;font-size:12px;transform:scaleX(0.88);transform-origin:0 0">Longitudinal Stress</div>
<div class="t" style="left:446px;top:538px;;font-size:11.5px;transform:scaleX(0.92);transform-origin:0 0">&sigma;<sub>m,d</sub></div>
<div class="t" style="right:517px;top:538px;;font-size:12px;transform:scaleX(0.88);transform-origin:100% 0">8.2</div>
<div class="t" style="left:578px;top:538px;;font-size:12px;transform:scaleX(0.88);transform-origin:0 0">N/mm<sup>2</sup></div>
<div class="a" style="left:190px;top:570px;width:588px;height:1px;background:#a0a0a0"></div>
<div class="t" style="left:217px;top:554px;;font-size:12px;transform:scaleX(0.88);transform-origin:0 0">Equivalent Cross-Section Height</div>
<div class="t" style="left:446px;top:554px;;font-size:11.5px;transform:scaleX(0.92);transform-origin:0 0">h<sub>0,65</sub></div>
<div class="t" style="right:517px;top:554px;;font-size:12px;transform:scaleX(0.88);transform-origin:100% 0">60.95</div>
<div class="t" style="left:578px;top:554px;;font-size:12px;transform:scaleX(0.88);transform-origin:0 0">cm</div>
<div class="a" style="left:190px;top:586px;width:588px;height:1px;background:#a0a0a0"></div>
<div class="t" style="left:217px;top:570px;;font-size:12px;transform:scaleX(0.88);transform-origin:0 0">Second Moment of Area</div>
<div class="t" style="left:446px;top:570px;;font-size:11.5px;transform:scaleX(0.92);transform-origin:0 0">I<sub>z</sub><sup style="margin-left:0;font-size:9px;top:-4px">*</sup></div>
<div class="t" style="right:517px;top:570px;;font-size:12px;transform:scaleX(0.88);transform-origin:100% 0">5078.88</div>
<div class="t" style="left:578px;top:570px;;font-size:12px;transform:scaleX(0.88);transform-origin:0 0">cm<sup>4</sup></div>
<div class="a" style="left:190px;top:602px;width:588px;height:1px;background:#a0a0a0"></div>
<div class="t" style="left:217px;top:586px;;font-size:12px;transform:scaleX(0.88);transform-origin:0 0">Torsional Moment of Inertia</div>
<div class="t" style="left:446px;top:586px;;font-size:11.5px;transform:scaleX(0.92);transform-origin:0 0">I<sub>t</sub><sup style="margin-left:0;font-size:9px;top:-4px">*</sup></div>
<div class="t" style="right:517px;top:586px;;font-size:12px;transform:scaleX(0.88);transform-origin:100% 0">18215.60</div>
<div class="t" style="left:578px;top:586px;;font-size:12px;transform:scaleX(0.88);transform-origin:0 0">cm<sup>4</sup></div>
<div class="a" style="left:190px;top:618px;width:588px;height:1px;background:#a0a0a0"></div>
<div class="t" style="left:217px;top:602px;;font-size:12px;transform:scaleX(0.88);transform-origin:0 0">Section Modulus</div>
<div class="t" style="left:446px;top:602px;;font-size:11.5px;transform:scaleX(0.92);transform-origin:0 0">W<sub>y</sub><sup style="margin-left:0;font-size:9px;top:-4px">*</sup></div>
<div class="t" style="right:517px;top:602px;;font-size:12px;transform:scaleX(0.88);transform-origin:100% 0">6190.79</div>
<div class="t" style="left:578px;top:602px;;font-size:12px;transform:scaleX(0.88);transform-origin:0 0">cm<sup>3</sup></div>
<div class="a" style="left:190px;top:634px;width:588px;height:1px;background:#a0a0a0"></div>
<div class="t" style="left:217px;top:618px;;font-size:12px;transform:scaleX(0.88);transform-origin:0 0">Equivalent Member Length</div>
<div class="t" style="left:446px;top:618px;;font-size:11.5px;transform:scaleX(0.92);transform-origin:0 0">l<sub>ef</sub></div>
<div class="t" style="right:517px;top:618px;;font-size:12px;transform:scaleX(0.88);transform-origin:100% 0">8.000</div>
<div class="t" style="left:578px;top:618px;;font-size:12px;transform:scaleX(0.88);transform-origin:0 0">m</div>
<div class="a" style="left:190px;top:650px;width:588px;height:1px;background:#a0a0a0"></div>
<div class="t" style="left:217px;top:634px;;font-size:12px;transform:scaleX(0.88);transform-origin:0 0">Modulus of Elasticity</div>
<div class="t" style="left:446px;top:634px;;font-size:11.5px;transform:scaleX(0.92);transform-origin:0 0">E<sub>0,05</sub></div>
<div class="t" style="right:517px;top:634px;;font-size:12px;transform:scaleX(0.88);transform-origin:100% 0">9100.0</div>
<div class="t" style="left:578px;top:634px;;font-size:12px;transform:scaleX(0.88);transform-origin:0 0">N/mm<sup>2</sup></div>
<div class="t" style="left:680px;top:634px;;font-size:12px;transform:scaleX(0.88);transform-origin:0 0">[7], Tab.2</div>
<div class="a" style="left:190px;top:666px;width:588px;height:1px;background:#a0a0a0"></div>
<div class="t" style="left:217px;top:650px;;font-size:12px;transform:scaleX(0.88);transform-origin:0 0">Multiplication Factor</div>
<div class="t" style="left:446px;top:650px;;font-size:11.5px;transform:scaleX(0.92);transform-origin:0 0"></div>
<div class="t" style="right:517px;top:650px;;font-size:12px;transform:scaleX(0.88);transform-origin:100% 0">1.40</div>
<div class="t" style="left:578px;top:650px;;font-size:12px;transform:scaleX(0.88);transform-origin:0 0"></div>
<div class="t" style="left:680px;top:650px;;font-size:12px;transform:scaleX(0.88);transform-origin:0 0">NCI Zu 6.3.3 (2)</div>
<div class="a" style="left:190px;top:682px;width:588px;height:1px;background:#a0a0a0"></div>
<div class="t" style="left:217px;top:666px;;font-size:12px;transform:scaleX(0.88);transform-origin:0 0">Shear Modulus</div>
<div class="t" style="left:446px;top:666px;;font-size:11.5px;transform:scaleX(0.92);transform-origin:0 0">G<sub>0,05</sub></div>
<div class="t" style="right:517px;top:666px;;font-size:12px;transform:scaleX(0.88);transform-origin:100% 0">540.0</div>
<div class="t" style="left:578px;top:666px;;font-size:12px;transform:scaleX(0.88);transform-origin:0 0">N/mm<sup>2</sup></div>
<div class="t" style="left:680px;top:666px;;font-size:12px;transform:scaleX(0.88);transform-origin:0 0">[7], Tab.2</div>
<div class="a" style="left:190px;top:698px;width:588px;height:1px;background:#a0a0a0"></div>
<div class="t" style="left:217px;top:682px;;font-size:12px;transform:scaleX(0.88);transform-origin:0 0">Relative Slenderness Ratio</div>
<div class="t" style="left:446px;top:682px;;font-size:11.5px;transform:scaleX(0.92);transform-origin:0 0">&lambda;<sub>rel,m</sub></div>
<div class="t" style="right:517px;top:682px;;font-size:12px;transform:scaleX(0.88);transform-origin:100% 0">1.225</div>
<div class="t" style="left:578px;top:682px;;font-size:12px;transform:scaleX(0.88);transform-origin:0 0"></div>
<div class="t" style="right:414px;top:682px;;font-size:12px;transform:scaleX(0.88);transform-origin:100% 0">&le; 1.4</div>
<div class="t" style="left:680px;top:682px;;font-size:12px;transform:scaleX(0.88);transform-origin:0 0">Eq. (6.30)</div>
<div class="a" style="left:197px;top:474px;width:1px;height:224px;background:#d8d8d8"></div>
<div class="a" style="left:198px;top:482px;width:10px;height:1px;background:#d8d8d8"></div>
<div class="a" style="left:198px;top:498px;width:10px;height:1px;background:#d8d8d8"></div>
<div class="a" style="left:198px;top:514px;width:10px;height:1px;background:#d8d8d8"></div>
<div class="a" style="left:198px;top:530px;width:10px;height:1px;background:#d8d8d8"></div>
<div class="a" style="left:198px;top:546px;width:10px;height:1px;background:#d8d8d8"></div>
<div class="a" style="left:198px;top:562px;width:10px;height:1px;background:#d8d8d8"></div>
<div class="a" style="left:198px;top:578px;width:10px;height:1px;background:#d8d8d8"></div>
<div class="a" style="left:198px;top:594px;width:10px;height:1px;background:#d8d8d8"></div>
<div class="a" style="left:198px;top:610px;width:10px;height:1px;background:#d8d8d8"></div>
<div class="a" style="left:198px;top:626px;width:10px;height:1px;background:#d8d8d8"></div>
<div class="a" style="left:198px;top:642px;width:10px;height:1px;background:#d8d8d8"></div>
<div class="a" style="left:198px;top:658px;width:10px;height:1px;background:#d8d8d8"></div>
<div class="a" style="left:198px;top:674px;width:10px;height:1px;background:#d8d8d8"></div>
<div class="a" style="left:198px;top:690px;width:10px;height:1px;background:#d8d8d8"></div>
<div class="a" style="left:441px;top:474px;width:1px;height:224px;background:#a0a0a0"></div>
<div class="a" style="left:495px;top:474px;width:1px;height:224px;background:#a0a0a0"></div>
<div class="a" style="left:573px;top:474px;width:1px;height:224px;background:#a0a0a0"></div>
<div class="a" style="left:639px;top:474px;width:1px;height:224px;background:#a0a0a0"></div>
<div class="a" style="left:675px;top:474px;width:1px;height:224px;background:#a0a0a0"></div>
<div class="a" style="left:777px;top:410px;width:1px;height:289px;background:#a0a0a0"></div>
<div class="a" style="left:778px;top:410px;width:17px;height:289px;background:#f0f0f0"></div>
<div class="a" style="left:779px;top:427px;width:15px;height:184px;background:#cdcdcd"></div>
<svg class="a" style="left:780px;top:414px" width="14" height="10" viewBox="780 414 14 10"><path d="M783.3 421.2L786.5 417.8L789.7 421.2" stroke="#505050" stroke-width="2" fill="none"/></svg>
<svg class="a" style="left:780px;top:685px" width="14" height="10" viewBox="780 685 14 10"><path d="M783.3 689.2L786.5 692.8L789.7 689.2" stroke="#505050" stroke-width="2" fill="none"/></svg>
<div class="a" style="left:803px;top:394px;width:271px;height:309px;background:#eef2fa;border-top:1px solid #c8d0ec"></div>
<div class="a" style="left:1073px;top:394px;width:1px;height:309px;background:#a8a8f0"></div>
<div class="a" style="left:803px;top:702px;width:271px;height:1px;background:#a8a8f0"></div>
<div class="a" style="left:804px;top:395px;width:269px;height:280px;background:linear-gradient(35deg,#fffffe 0%,#fcfaf1 50%,#f7f1de 100%);border-left:1px solid #7a7a7a;border-top:1px solid #7a7a7a"></div>
<div class="a" style="left:804px;top:675px;width:1px;height:27px;background:#dce6f8"></div>
<div class="t" style="left:809px;top:396px;;font-size:10.6px">Rectangle 10/31.35</div>
<svg class="a" style="left:804px;top:395px" width="269" height="281" viewBox="804 395 269 281">
<rect x="906.5" y="457.5" width="50" height="157.5" fill="#ff8000" stroke="#000" stroke-width="1"/>
<g stroke="#000" stroke-width="1">
<path d="M906.5 477.5H956.5M906.5 497.5H956.5M906.5 516.5H956.5M906.5 536.5H956.5M906.5 556.5H956.5M906.5 576.5H956.5M906.5 596.5H956.5"/>
<path d="M906.5 432.5H956.5M906.5 430V455M956.5 430V455"/>
<path d="M881.5 457.5V615M879 457.5H904M879 615H904"/>
</g>
<g fill="#000">
<path d="M906.5 430L909 432.5L906.5 435L904 432.5Z"/>
<path d="M956.5 430L959 432.5L956.5 435L954 432.5Z"/>
<path d="M881.5 455L884 457.5L881.5 460L879 457.5Z"/>
<path d="M881.5 612.5L884 615L881.5 617.5L879 615Z"/>
</g>
<text x="931" y="429" font-size="10.8" text-anchor="middle" font-family="Liberation Sans">10.00</text>
<text transform="translate(877.5 536) rotate(-90)" font-size="10.8" text-anchor="middle" font-family="Liberation Sans">31.35</text>
<g stroke="#ff00ff" stroke-width="1.1" fill="none" stroke-dasharray="6 3 1.5 3">
<path d="M931.5 536.5H1029"/>
<path d="M931.5 536.5V634"/>
</g>
<circle cx="931.5" cy="536.5" r="1.6" fill="#ff00ff"/>
<path d="M1029 533L1035.3 536.5L1029 540Z" fill="#ff00ff"/>
<path d="M928 634L935.2 634L931.6 640.2Z" fill="#ff00ff"/>
<g stroke="#ff00ff" stroke-width="1.3" fill="none">
<path d="M1036 542.6H1039.2M1040.2 542.6H1043.2M1037.3 542.6L1039.6 546.5M1042 542.6L1039.6 546.5V548.6H1037"/>
<path d="M934.5 645.5V645.2H939M939 645.5L934.6 649.6M934.2 650H939.2V648.6M934.5 646.6V645.5"/>
</g>
</svg>
<div class="t" style="left:1046px;top:656px;;font-size:10.6px">[cm]</div>
<div class="a" style="left:808px;top:677px;width:25px;height:21px;background:#e1e1e1;border:1px solid #adadad"></div>
<svg class="a" style="left:808px;top:677px" width="25" height="21" viewBox="808 677 25 21">
<defs><radialGradient id="ig" cx="0.3" cy="0.25" r="0.8"><stop offset="0" stop-color="#6070c0"/><stop offset="0.45" stop-color="#1a2a6a"/><stop offset="1" stop-color="#000820"/></radialGradient></defs>
<circle cx="819.6" cy="686.6" r="7.2" fill="url(#ig)"/>
<ellipse cx="820.3" cy="682.2" rx="1.7" ry="1.3" fill="#fff"/>
<path d="M817.3 684.7H821.4V689.6H822.8V691.3H816.8V689.6H818.2V686.3H817.3Z" fill="#fff"/></svg>
<div class="a" style="left:985px;top:677px;width:25px;height:21px;background:#cce4f7;border:1px solid #005499;box-shadow:inset 0 0 0 1px #e5f1fb"></div>
<svg class="a" style="left:985px;top:677px" width="25" height="21" viewBox="985 677 25 21">
<text x="997.5" y="686.5" font-size="9" text-anchor="middle" font-family="Liberation Serif" font-weight="bold" fill="#202020">X</text>
<path d="M991 688.7H1003.5" stroke="#3040a0" stroke-width="2.4"/>
<path d="M991.5 688.7H1003" stroke="#a8b8f0" stroke-width="0.8"/>
<path d="M990 688.7L993.5 685.8V691.6Z" fill="#4050c0"/>
<path d="M1004.8 688.7L1001.3 685.8V691.6Z" fill="#4050c0"/></svg>
<div class="a" style="left:1015px;top:677px;width:25px;height:21px;background:#cce4f7;border:1px solid #005499;box-shadow:inset 0 0 0 1px #e5f1fb"></div>
<svg class="a" style="left:1015px;top:677px" width="25" height="21" viewBox="1015 677 25 21">
<path d="M1022 681.6H1031.5M1022 681.6V691.5" stroke="#3a4a90" stroke-width="1.6"/>
<path d="M1022 681.6H1031.5M1022 681.6V691.5" stroke="#a8b8f0" stroke-width="0.6"/>
<path d="M1030.5 679.5L1034.5 681.6L1030.5 683.7Z" fill="#5060b0"/>
<path d="M1019.9 691L1022 695L1024.1 691Z" fill="#5060b0"/>
<circle cx="1022" cy="681.6" r="2" fill="#4a5ab0"/></svg>
<div class="a" style="left:1045px;top:677px;width:25px;height:21px;background:#e1e1e1;border:1px solid #adadad"></div>
<svg class="a" style="left:1045px;top:677px" width="25" height="21" viewBox="1045 677 25 21">
<circle cx="1052.8" cy="687.2" r="3.4" fill="#f4f4f4" stroke="#101010" stroke-width="1.5"/>
<path d="M1055.8 690.4L1059.5 694" stroke="#101010" stroke-width="2.4" stroke-linecap="round"/>
<path d="M1054 680L1064.3 690.6M1064.3 679.6L1055.6 690.3" stroke="#2a3ab0" stroke-width="2.4" stroke-linecap="round"/>
<path d="M1054 680L1064.3 690.6M1064.3 679.6L1055.6 690.3" stroke="#7898f8" stroke-width="1.2" stroke-linecap="round"/></svg>
<div class="a" style="left:10px;top:724px;width:25px;height:21px;background:#e1e1e1;border:2px solid #0078d7"></div>
<div class="a" style="left:12px;top:726px;width:21px;height:17px;border:1px dotted #b8a898"></div>
<svg class="a" style="left:10px;top:724px" width="25" height="21" viewBox="10 724 25 21">
<defs><radialGradient id="hb" cx="0.4" cy="0.4" r="0.7"><stop offset="0" stop-color="#ffffff"/><stop offset="0.65" stop-color="#f0f0f0"/><stop offset="1" stop-color="#a0a0a0"/></radialGradient>
<linearGradient id="qg" x1="0" y1="0" x2="1" y2="1"><stop offset="0" stop-color="#7890e8"/><stop offset="1" stop-color="#20308a"/></linearGradient></defs>
<path d="M17 740.8L18.3 737.6A6.9 6.3 0 1 1 21.5 739.2Z" fill="url(#hb)" stroke="#6a6a6a" stroke-width="0.9"/>
<path d="M19.6 730.6Q20 728.2 22.6 728.2Q25.2 728.4 24.6 731Q24.2 732.4 22.6 733.4Q21.6 734 21.6 735.4" stroke="url(#qg)" stroke-width="1.7" fill="none" stroke-linecap="round"/>
<circle cx="21.5" cy="737.3" r="1" fill="#20308a"/></svg>
<div class="a" style="left:44px;top:724px;width:25px;height:21px;background:#e1e1e1;border:1px solid #adadad"></div>
<svg class="a" style="left:44px;top:724px" width="25" height="21" viewBox="44 724 25 21">
<defs><linearGradient id="ag44" x1="0" y1="0" x2="0" y2="1"><stop offset="0" stop-color="#4050c0"/><stop offset="0.45" stop-color="#e8f0ff"/><stop offset="1" stop-color="#3040b0"/></linearGradient>
<linearGradient id="wg44" x1="0" y1="0" x2="1" y2="1"><stop offset="0" stop-color="#ffffff"/><stop offset="1" stop-color="#b8b8b8"/></linearGradient></defs>
<rect x="52.7" y="726.7" width="11" height="10" fill="url(#wg44)" stroke="#202020" stroke-width="1"/>
<rect x="53.2" y="727.2" width="10" height="1.8" fill="#3a48c0"/>
<rect x="53.2" y="727.2" width="2.5" height="1.8" fill="#f8f8f8"/>
<path d="M53.7 733.4H60.1V737.8H53.7Z" fill="url(#ag44)" stroke="#101850" stroke-width="0.6"/>
<path d="M48.7 735.6L53.7 730.6V741Z" fill="url(#ag44)" stroke="#000830" stroke-width="0.8"/></svg>
<div class="a" style="left:74px;top:724px;width:25px;height:21px;background:#e1e1e1;border:1px solid #adadad"></div>
<svg class="a" style="left:74px;top:724px" width="25" height="21" viewBox="74 724 25 21">
<defs><linearGradient id="ag74" x1="0" y1="0" x2="0" y2="1"><stop offset="0" stop-color="#4050c0"/><stop offset="0.45" stop-color="#e8f0ff"/><stop offset="1" stop-color="#3040b0"/></linearGradient>
<linearGradient id="wg74" x1="0" y1="0" x2="1" y2="1"><stop offset="0" stop-color="#ffffff"/><stop offset="1" stop-color="#b8b8b8"/></linearGradient></defs>
<rect x="78.7" y="726.7" width="11" height="10" fill="url(#wg74)" stroke="#202020" stroke-width="1"/>
<rect x="79.2" y="727.2" width="10" height="1.8" fill="#3a48c0"/>
<rect x="79.2" y="727.2" width="2.5" height="1.8" fill="#f8f8f8"/>
<path d="M89.3 733.4H82.9V737.8H89.3Z" fill="url(#ag74)" stroke="#101850" stroke-width="0.6"/>
<path d="M94.3 735.6L89.3 730.6V741Z" fill="url(#ag74)" stroke="#000830" stroke-width="0.8"/></svg>
<div class="a" style="left:181px;top:724px;width:81px;height:21px;background:#cccccc;border:1px solid #bfbfbf"></div>
<div class="t" style="left:181px;width:81px;text-align:center;top:727px;color:#838383;font-size:10.6px">Calculation</div>
<div class="a" style="left:271px;top:724px;width:81px;height:21px;background:#e1e1e1;border:1px solid #adadad"></div>
<div class="t" style="left:271px;width:81px;text-align:center;top:727px;;font-size:10.6px">Details...</div>
<div class="a" style="left:361px;top:724px;width:81px;height:21px;background:#e1e1e1;border:1px solid #adadad"></div>
<div class="t" style="left:361px;width:81px;text-align:center;top:727px;;font-size:10.6px"><u>N</u>at. Annex...</div>
<div class="a" style="left:451px;top:724px;width:81px;height:21px;background:#e1e1e1;border:1px solid #adadad"></div>
<div class="t" style="left:451px;width:81px;text-align:center;top:727px;;font-size:10.6px">Report...</div>
<div class="a" style="left:541px;top:724px;width:81px;height:21px;background:#e1e1e1;border:1px solid #adadad"></div>
<div class="t" style="left:541px;width:81px;text-align:center;top:727px;;font-size:10.6px">RF-COMBI</div>
<div class="a" style="left:920px;top:724px;width:73px;height:21px;background:#e1e1e1;border:1px solid #adadad"></div>
<div class="t" style="left:920px;width:73px;text-align:center;top:727px;;font-size:10.6px">OK</div>
<div class="a" style="left:1002px;top:724px;width:73px;height:21px;background:#e1e1e1;border:1px solid #adadad"></div>
<div class="t" style="left:1002px;width:73px;text-align:center;top:727px;;font-size:10.6px">Cancel</div>
<div class="a" style="left:1px;top:752px;width:1083px;height:1px;background:#a0a0a0"></div>
<div class="a" style="left:1px;top:753px;width:1083px;height:1px;background:#fff"></div>
</body></html>
